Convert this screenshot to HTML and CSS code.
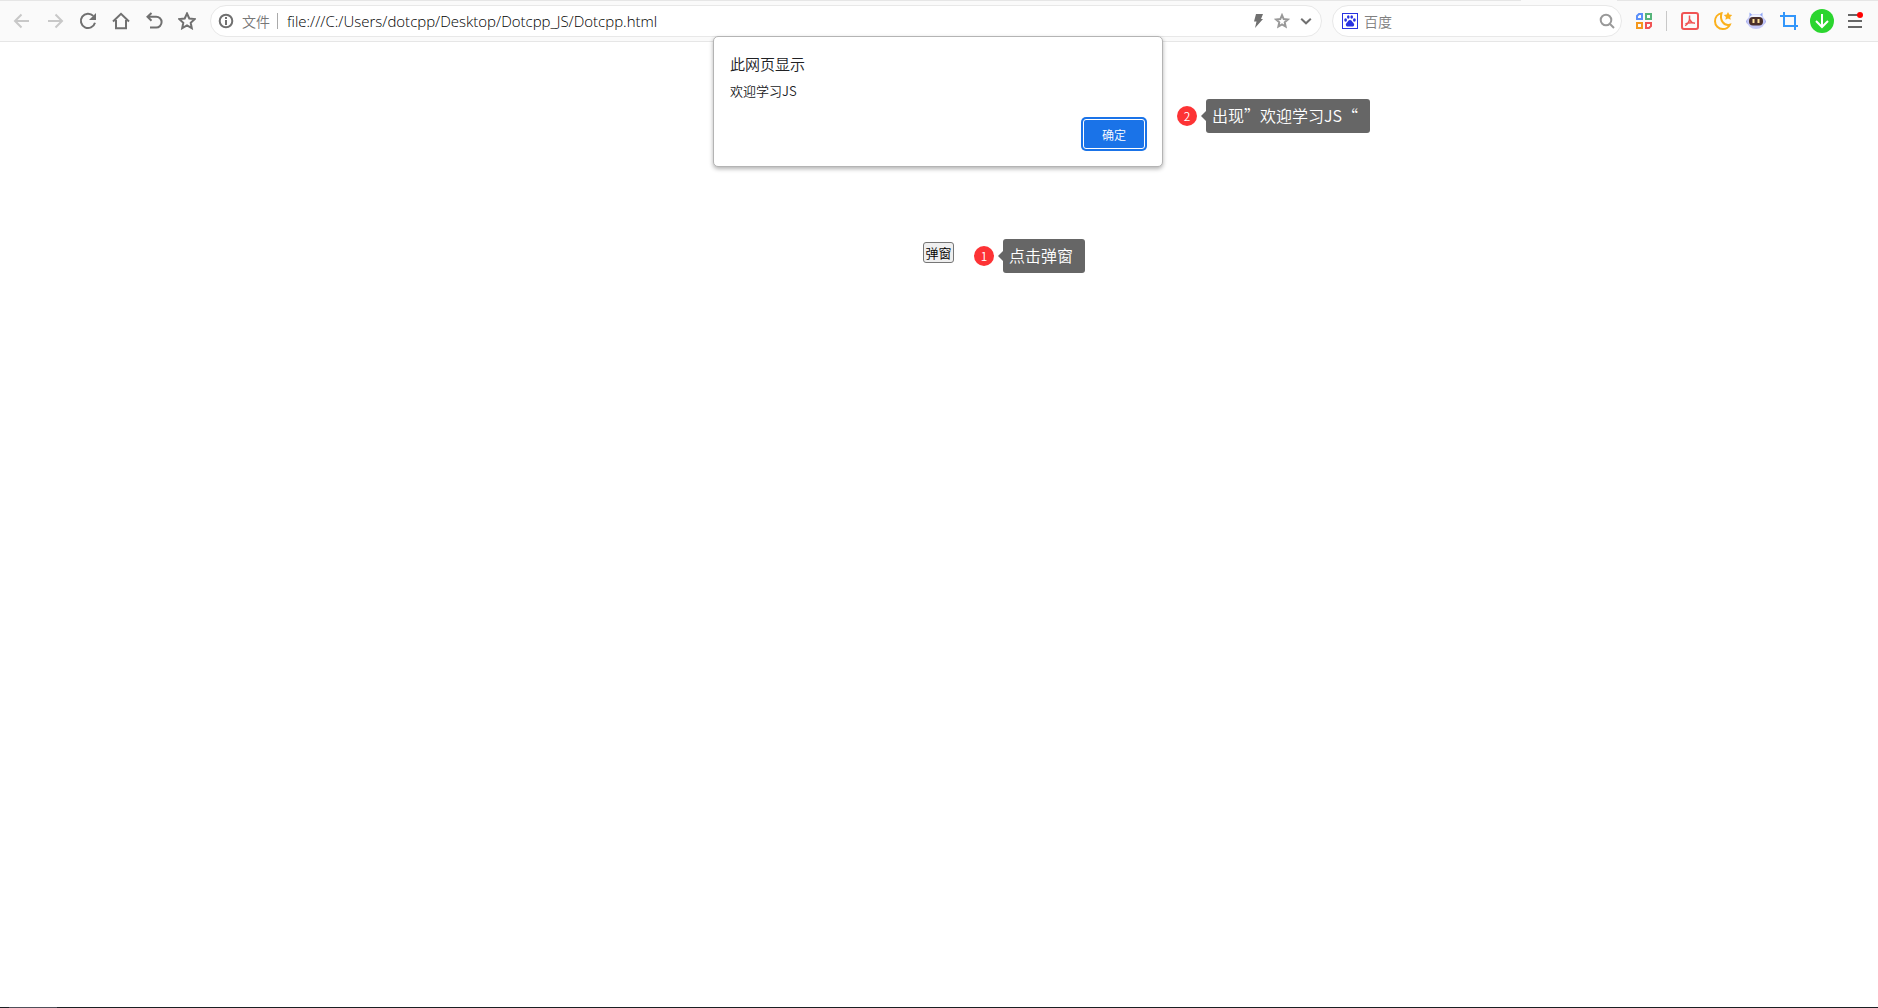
FILE: index.html
```html
<!DOCTYPE html>
<html lang="zh-CN">
<head>
    <meta charset="UTF-8">
    <meta name="viewport" content="width=device-width, initial-scale=1.0">
    <title>Dotcpp</title>
    <link rel="stylesheet" href="styles.css">
</head>
<body>
    <header class="toolbar">
        <span class="tab-gap"></span>
        <nav class="nav-buttons">
            <button class="icon-button disabled" aria-label="后退" disabled>
                <svg width="18" height="18" viewBox="0 0 18 18"><path d="M16 9H2.500M8.500 2.500L2 9l6.500 6.500"/></svg>
            </button>
            <button class="icon-button disabled" aria-label="前进" disabled>
                <svg width="18" height="18" viewBox="0 0 18 18"><path d="M2 9h13.500M9.500 2.500L16 9l-6.500 6.500"/></svg>
            </button>
            <button class="icon-button" aria-label="刷新">
                <svg width="18" height="18" viewBox="0 0 18 18"><path d="M14.300 3.900A7.200 7.200 0 1 0 16 10.800"/><path class="solid" d="M17 1v7h-7z"/></svg>
            </button>
            <button class="icon-button" aria-label="主页">
                <svg width="18" height="18" viewBox="0 0 18 18"><path d="M1 9.500L9 1.800l8 7.700M4 8v8.200h10V8"/></svg>
            </button>
            <button class="icon-button" aria-label="恢复">
                <svg width="18" height="18" viewBox="0 0 18 18"><path d="M2.500 4.700h8.700a5.400 5.400 0 0 1 0 10.800H5M6.500 1L2.500 4.700l4 4"/></svg>
            </button>
            <button class="icon-button" aria-label="收藏">
                <svg width="18" height="18" viewBox="0 0 18 18"><path d="M9 1.500l2.300 5 5.400.6-4 3.700 1.100 5.400L9 13.500l-4.800 2.700 1.100-5.400-4-3.700 5.400-.6z"/></svg>
            </button>
        </nav>

        <div class="field address">
            <svg class="info" width="16" height="16" viewBox="0 0 16 16"><circle cx="8" cy="8" r="6.300"/><path d="M8 7v5M8 4v2"/></svg>
            <label for="url">文件</label>
            <input type="text" id="url" value="file:///C:/Users/dotcpp/Desktop/Dotcpp_JS/Dotcpp.html">
            <button aria-label="极速模式">
                <svg width="16" height="16" viewBox="0 0 16 16"><path class="solid" d="M6 1h7l-2 5h2L5 15l1.500-6.500H4z"/></svg>
            </button>
            <button class="light" aria-label="添加收藏">
                <svg width="16" height="16" viewBox="0 0 16 16"><path d="M8 2.200l1.700 3.900 4.200.4-3.200 2.800.9 4.200L8 11.300l-3.600 2.200.9-4.200-3.200-2.800 4.200-.4z"/></svg>
            </button>
            <button aria-label="展开">
                <svg width="16" height="16" viewBox="0 0 16 16"><path d="M3.200 5.800L8 10.300l4.800-4.500"/></svg>
            </button>
        </div>

        <div class="field search">
            <svg width="16" height="16" viewBox="0 0 16 16">
                <rect x=".5" y=".5" width="15" height="15" fill="#fff" stroke="#2932e1"/>
                <g fill="#2932e1">
                    <ellipse cx="3.600" cy="7" rx="1.400" ry="1.800"/>
                    <ellipse cx="6.300" cy="4" rx="1.300" ry="1.800"/>
                    <ellipse cx="9.700" cy="4" rx="1.300" ry="1.800"/>
                    <ellipse cx="12.400" cy="7" rx="1.400" ry="1.800"/>
                    <path d="M8 7c1.500 0 2 1.500 3 2.400s1.500 1.800 1 3-1.800 1.300-4 1.100c-2.200.2-3.500.1-4-1.100s0-2.100 1-3S6.500 7 8 7z"/>
                </g>
            </svg>
            <input type="text" aria-label="搜索" placeholder="百度">
            <button class="light" aria-label="搜索">
                <svg width="16" height="16" viewBox="0 0 16 16"><circle cx="7" cy="7" r="5.300"/><path d="M11 11l4 4"/></svg>
            </button>
        </div>

        <div class="extensions">
            <button class="icon-button" aria-label="应用">
                <svg width="16" height="16" viewBox="0 0 16 16" fill="none" stroke-width="2">
                    <path stroke="#5b8ff9" d="M3 1h3v5H1V3z"/>
                    <path stroke="#55b47a" d="M10 1h5v5h-5z"/>
                    <path stroke="#f5981c" d="M1 10h5v5H1z"/>
                    <path stroke="#f05454" d="M10 10h5v3l-2 2h-3z"/>
                </svg>
            </button>
            <span class="divider"></span>
            <button class="icon-button" aria-label="PDF">
                <svg width="18" height="18" viewBox="0 0 18 18" fill="none" stroke="#f05454">
                    <rect x="1" y="1" width="16" height="16" rx="2" stroke-width="2"/>
                    <path stroke-width="1.500" d="M8.500 3.500v3.700c0 2.500-2.500 5.500-4.500 6.300M8.700 7.500c.8 2 2.800 3.500 5.300 3.800M4.500 12c2-1 5-1.400 9-1"/>
                </svg>
            </button>
            <button class="icon-button" aria-label="夜间模式">
                <svg width="20" height="20" viewBox="0 0 20 20">
                    <path fill="none" stroke="#fbb01c" stroke-width="2" d="M8.500 2.200C4.500 3 2 6.400 2 10.200 2 14.700 5.500 18 9.800 18c3.200 0 5.800-1.600 7-4.200-5.800 1.400-10.300-4.600-8.300-11.600z"/>
                    <path fill="#fbb01c" d="M15 1l1.300 2.500 2.900.4-2 2 .5 2.900L15 7.500l-2.600 1.300.5-2.900-2.100-2 2.900-.4z"/>
                </svg>
            </button>
            <button class="icon-button" aria-label="助手">
                <svg width="20" height="18" viewBox="0 0 20 18">
                    <path fill="#8ea6f6" d="M3.500 6V.5L7 3.500h6l3.500-3V6z"/>
                    <ellipse cx="10" cy="9.500" rx="10" ry="4.500" fill="#a3a9ee"/>
                    <ellipse cx="10" cy="9.500" rx="9" ry="7.500" fill="#c3c7f8"/>
                    <path fill="#f1f3ff" d="M3 5.500c3-4 11-4 14 0z"/>
                    <rect x="3" y="5" width="14" height="8.500" rx="4" fill="#4b302c"/>
                    <path stroke="#ffe39b" stroke-width="2" d="M7.500 7v4M12.500 7v4"/>
                </svg>
            </button>
            <button class="icon-button" aria-label="截图">
                <svg width="18" height="18" viewBox="0 0 18 18" fill="none" stroke="#3296fa" stroke-width="2"><path d="M0 4h15v14M4 0v14h14"/></svg>
            </button>
            <button class="icon-button" aria-label="下载">
                <svg width="24" height="24" viewBox="0 0 24 24">
                    <circle cx="12" cy="12" r="12" fill="#2bd52f"/>
                    <path fill="none" stroke="#fff" stroke-width="2" d="M12 5v13M6 12l6 6 6-6"/>
                </svg>
            </button>
            <button class="icon-button" aria-label="菜单">
                <svg width="18" height="18" viewBox="0 0 18 18">
                    <path stroke="#666" stroke-width="2" d="M2 3h14M2 9h14M2 15h14"/>
                    <circle cx="14" cy="3" r="3" fill="#f00"/>
                </svg>
            </button>
        </div>
    </header>

    <main class="page">
        <button class="popup-button">弹窗</button>

        <div class="note note-click">
            <span class="badge">1</span>
            <span class="bubble">点击弹窗</span>
        </div>
        <div class="note note-result">
            <span class="badge">2</span>
            <span class="bubble">出现”欢迎学习JS“</span>
        </div>
    </main>

    <div class="dialog" role="alertdialog" aria-labelledby="dialogTitle">
        <h1 id="dialogTitle">此网页显示</h1>
        <p>欢迎学习JS</p>
        <button class="ok-button">确定</button>
    </div>

    <footer class="taskbar"><span></span></footer>
</body>
</html>
```

FILE: styles.css
```css
* {
    box-sizing: border-box;
}
body {
    margin: 0;
    min-height: 100vh;
    display: flex;
    flex-direction: column;
    position: relative;
    font-family: "Noto Sans CJK SC", "Noto Sans", sans-serif;
    font-weight: 350;
    background-color: #fff;
}
button {
    padding: 0;
    border: none;
    background: none;
    font-family: inherit;
    font-weight: inherit;
    cursor: pointer;
}
svg {
    display: block;
    flex-shrink: 0;
}

/* Toolbar */
.toolbar {
    position: relative;
    display: flex;
    align-items: center;
    height: 42px;
    padding: 0 7px 0 5px;
    background-color: #fafafa;
    border-top: 1px solid #e6e6e6;
    border-bottom: 1px solid #e6e6e6;
}
.tab-gap {
    position: absolute;
    top: -1px;
    right: 261px;
    width: 96px;
    height: 1px;
    background-color: #fafafa;
}
.nav-buttons, .extensions {
    display: flex;
    align-items: center;
}
.icon-button {
    display: flex;
    align-items: center;
    justify-content: center;
    width: 33px;
    height: 32px;
}
.nav-buttons svg, .field button svg, .info {
    fill: none;
    stroke: #707070;
    stroke-width: 2;
}
.nav-buttons .disabled svg {
    stroke: #c8c8c8;
}
.nav-buttons svg .solid, .field button svg .solid {
    fill: #707070;
    stroke: none;
}
.field {
    display: flex;
    align-items: center;
    height: 32px;
    background-color: #fff;
    border: 1px solid #e8e8e8;
    border-radius: 16px;
}
.field input {
    flex: 1;
    min-width: 0;
    padding: 0;
    border: none;
    outline: none;
    background: none;
    font-family: "Open Sans", "Noto Sans CJK SC", sans-serif;
    font-size: 14px;
    font-weight: 350;
    color: #222;
}
.field input::placeholder {
    color: #808080;
    opacity: 1;
}
.field .light svg {
    stroke: #999;
}
.address {
    flex: 1;
    margin-left: 7px;
    padding: 0 3px 0 7px;
}
.address input {
    font-size: 15px;
    font-weight: 300;
    color: #000;
}
.address button {
    width: 24px;
    display: flex;
    justify-content: center;
}
.address label {
    margin: 0 9px 0 8px;
    padding-right: 7px;
    border-right: 1px solid #aaa;
    font-size: 14px;
    line-height: 16px;
    color: #777;
}
.search {
    width: 290px;
    margin: 0 5px 0 10px;
    padding: 0 6px 0 9px;
    gap: 6px;
}
.divider {
    width: 1px;
    height: 20px;
    margin: 0 6px;
    background-color: #c8c8c8;
}

/* Page content */
.page {
    position: relative;
    flex: 1;
    padding: 200px 1px 0 0;
    text-align: center;
}
.popup-button {
    display: block;
    width: 31px;
    height: 21px;
    margin: 0 auto;
    border: 1px solid #767676;
    border-radius: 3px;
    background-color: #efefef;
    font-size: 13px;
    line-height: 16px;
    color: #000;
}
.note {
    position: absolute;
    display: flex;
    align-items: center;
    gap: 9px;
    color: #fff;
}
.note-click {
    top: 197px;
    left: calc(50% + 35px);
}
.note-result {
    top: 57px;
    left: calc(50% + 238px);
}
.badge {
    width: 20px;
    height: 20px;
    border-radius: 50%;
    background-color: #fd3335;
    font-size: 12px;
    line-height: 20px;
}
.bubble {
    position: relative;
    height: 34px;
    padding: 0 12px 0 6px;
    border-radius: 3px;
    background-color: #666;
    font-size: 16px;
    line-height: 32px;
    white-space: nowrap;
}
.bubble::before {
    content: "";
    position: absolute;
    top: 12px;
    left: -5px;
    border: 5px solid transparent;
    border-left: none;
    border-right-color: #666;
}

/* Alert dialog */
.dialog {
    position: absolute;
    top: 36px;
    left: calc(50% - 226px);
    width: 450px;
    display: flex;
    flex-direction: column;
    padding: 16px 16px 15px;
    border: 1px solid #b4b4b4;
    border-radius: 5px;
    background-color: #fff;
    box-shadow: 0 2px 4px rgba(0, 0, 0, 0.3);
    color: #202124;
}
.dialog h1 {
    margin: 0;
    font-size: 15px;
    font-weight: inherit;
    line-height: 22px;
}
.dialog p {
    margin: 6px 0 16px;
    font-size: 13px;
    line-height: 20px;
}
.ok-button {
    align-self: flex-end;
    width: 62px;
    height: 30px;
    margin: 2px 1px 2px 2px;
    border: 1px solid #fff;
    border-radius: 3px;
    background-color: #1a73e8;
    box-shadow: 0 0 0 2px #1a73e8;
    font-size: 12px;
    color: #fff;
}

.taskbar {
    height: 1px;
    padding-left: 9px;
    background-color: #1b2024;
}
.taskbar span {
    display: block;
    width: 48px;
    height: 1px;
    background-color: #50505a;
}
```
